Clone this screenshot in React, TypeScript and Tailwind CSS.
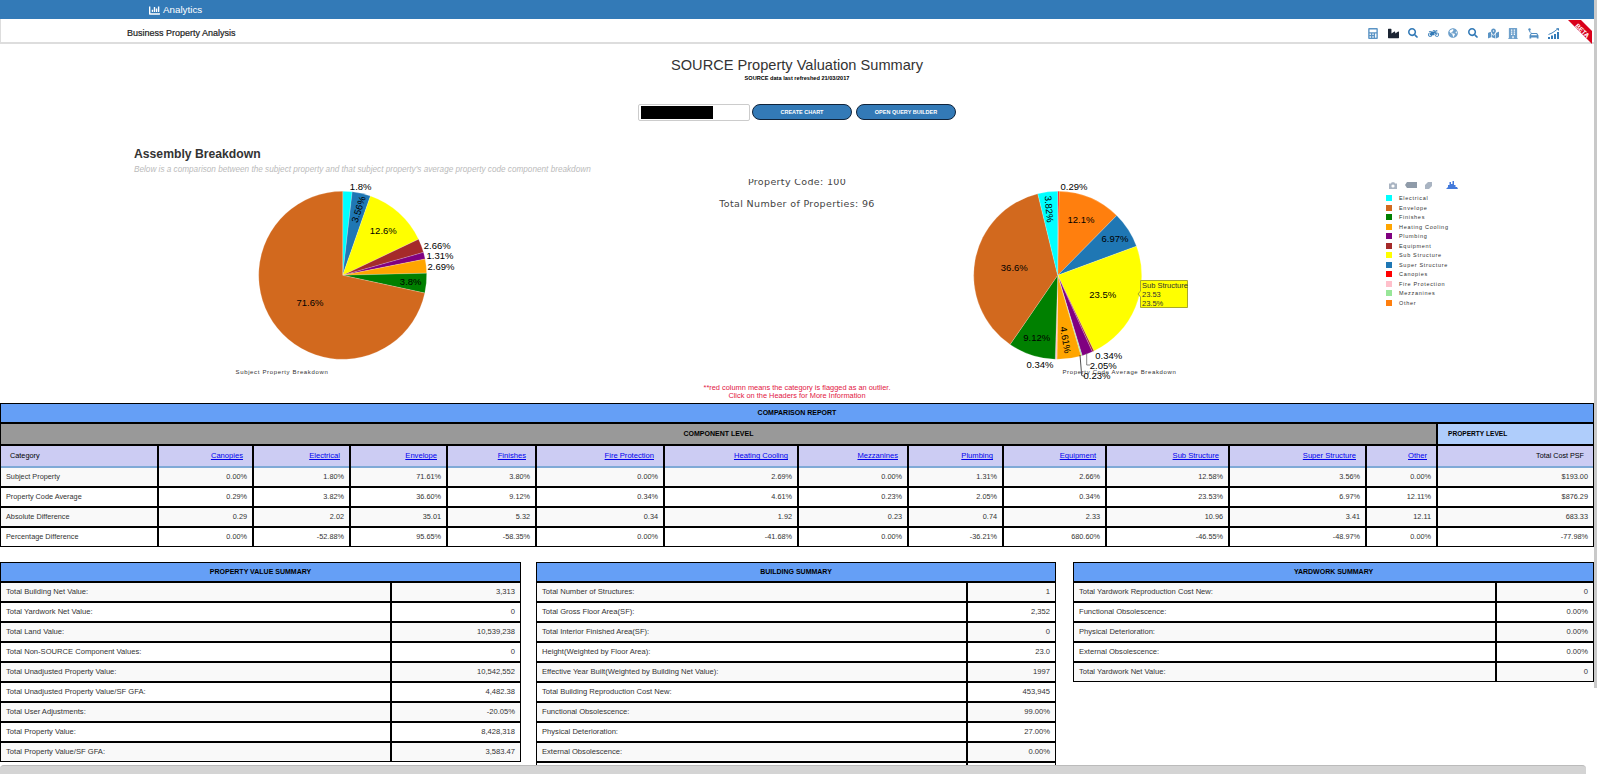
import {
  FaCalculator,
  FaChartBar,
  FaBuilding,
  FaGlobeAmericas,
  FaIndustry,
  FaMapMarkedAlt,
  FaMotorcycle,
  FaSearch,
} from "react-icons/fa";

const columns = [
  "Canopies",
  "Electrical",
  "Envelope",
  "Finishes",
  "Fire Protection",
  "Heating Cooling",
  "Mezzanines",
  "Plumbing",
  "Equipment",
  "Sub Structure",
  "Super Structure",
  "Other",
];

const comparison = [
  ["Subject Property", "0.00%", "1.80%", "71.61%", "3.80%", "0.00%", "2.69%", "0.00%", "1.31%", "2.66%", "12.58%", "3.56%", "0.00%", "$193.00"],
  ["Property Code Average", "0.29%", "3.82%", "36.60%", "9.12%", "0.34%", "4.61%", "0.23%", "2.05%", "0.34%", "23.53%", "6.97%", "12.11%", "$876.29"],
  ["Absolute Difference", "0.29", "2.02", "35.01", "5.32", "0.34", "1.92", "0.23", "0.74", "2.33", "10.96", "3.41", "12.11", "683.33"],
  ["Percentage Difference", "0.00%", "-52.88%", "95.65%", "-58.35%", "0.00%", "-41.68%", "0.00%", "-36.21%", "680.60%", "-46.55%", "-48.97%", "0.00%", "-77.98%"],
];

const propertySummary = [
  ["Total Building Net Value:", "3,313"],
  ["Total Yardwork Net Value:", "0"],
  ["Total Land Value:", "10,539,238"],
  ["Total Non-SOURCE Component Values:", "0"],
  ["Total Unadjusted Property Value:", "10,542,552"],
  ["Total Unadjusted Property Value/SF GFA:", "4,482.38"],
  ["Total User Adjustments:", "-20.05%"],
  ["Total Property Value:", "8,428,318"],
  ["Total Property Value/SF GFA:", "3,583.47"],
];

const buildingSummary = [
  ["Total Number of Structures:", "1"],
  ["Total Gross Floor Area(SF):", "2,352"],
  ["Total Interior Finished Area(SF):", "0"],
  ["Height(Weighted by Floor Area):", "23.0"],
  ["Effective Year Built(Weighted by Building Net Value):", "1997"],
  ["Total Building Reproduction Cost New:", "453,945"],
  ["Functional Obsolescence:", "99.00%"],
  ["Physical Deterioration:", "27.00%"],
  ["External Obsolescence:", "0.00%"],
  ["Total Building Net Value:", "3,313"],
];

const yardworkSummary = [
  ["Total Yardwork Reproduction Cost New:", "0"],
  ["Functional Obsolescence:", "0.00%"],
  ["Physical Deterioration:", "0.00%"],
  ["External Obsolescence:", "0.00%"],
  ["Total Yardwork Net Value:", "0"],
];

const legend = [
  ["Electrical", "#00ffff"],
  ["Envelope", "#d2691e"],
  ["Finishes", "#008000"],
  ["Heating Cooling", "#ffa500"],
  ["Plumbing", "#800080"],
  ["Equipment", "#a52a2a"],
  ["Sub Structure", "#ffff00"],
  ["Super Structure", "#1f77b4"],
  ["Canopies", "#ff0000"],
  ["Fire Protection", "#ffc0cb"],
  ["Mezzanines", "#98e698"],
  ["Other", "#ff7f0e"],
];

type Slice = [number, string];
type Label = [string, number, number, number?];

const subjectSlices: Slice[] = [
  [1.8, "#00ffff"],
  [3.56, "#1f77b4"],
  [12.58, "#ffff00"],
  [2.66, "#a52a2a"],
  [1.31, "#800080"],
  [2.69, "#ffa500"],
  [3.8, "#008000"],
  [71.61, "#d2691e"],
];

const averageSlices: Slice[] = [
  [0.29, "#ff0000"],
  [12.11, "#ff7f0e"],
  [6.97, "#1f77b4"],
  [23.53, "#ffff00"],
  [0.34, "#a52a2a"],
  [2.05, "#800080"],
  [0.23, "#98e698"],
  [4.61, "#ffa500"],
  [0.34, "#ffc0cb"],
  [9.12, "#008000"],
  [36.6, "#d2691e"],
  [3.82, "#00ffff"],
];

const subjectLabels: Label[] = [
  ["1.8%", 360.7, 186.7],
  ["3.56%", 358.3, 209.3, -72],
  ["12.6%", 383.3, 230],
  ["2.66%", 437.3, 245],
  ["1.31%", 440, 255.3],
  ["2.69%", 441, 266],
  ["3.8%", 410.7, 281.7],
  ["71.6%", 310, 302],
];

const averageLabels: Label[] = [
  ["0.29%", 1074, 186.7],
  ["12.1%", 1081, 219],
  ["6.97%", 1115, 238.3],
  ["23.5%", 1102.7, 294],
  ["0.34%", 1108.7, 355],
  ["2.05%", 1103.3, 365],
  ["0.23%", 1097, 375.3],
  ["4.61%", 1065.7, 340, 80],
  ["9.12%", 1036.7, 337.3],
  ["0.34%", 1040, 364.3],
  ["36.6%", 1014.3, 267],
  ["3.82%", 1049.3, 209, 85],
];

function slicePath(cx: number, cy: number, r: number, from: number, to: number) {
  const a = (from / 100) * 2 * Math.PI;
  const b = (to / 100) * 2 * Math.PI;
  const large = to - from > 50 ? 1 : 0;
  const x1 = cx + r * Math.sin(a);
  const y1 = cy - r * Math.cos(a);
  const x2 = cx + r * Math.sin(b);
  const y2 = cy - r * Math.cos(b);
  return `M${cx} ${cy}L${x1} ${y1}A${r} ${r} 0 ${large} 1 ${x2} ${y2}Z`;
}

function Pie({ cx, slices, labels }: { cx: number; slices: Slice[]; labels: Label[] }) {
  const cy = 275.3;
  let total = 0;
  return (
    <>
      {slices.map(([value, color], i) => {
        const from = total;
        total += value;
        return <path key={i} d={slicePath(cx, cy, 84, from, total)} fill={color} stroke="#ffffff" strokeWidth="0.2" />;
      })}
      {labels.map(([text, x, y, rotate], i) => (
        <text
          key={i}
          x={x}
          y={y}
          fontSize="9.5"
          fill="#000"
          textAnchor="middle"
          dominantBaseline="central"
          transform={rotate ? `rotate(${rotate} ${x} ${y})` : undefined}
        >
          {text}
        </text>
      ))}
    </>
  );
}

function SummaryTable({
  title,
  rows,
  left,
  right,
}: {
  title: string;
  rows: string[][];
  left: string;
  right: string;
}) {
  return (
    <div className="bg-black p-px">
      <div className="h-[18px] mb-[2px] bg-[#659ff6] flex items-center justify-center text-[7px] font-bold text-black">
        {title}
      </div>
      {rows.map(([label, value], i) => (
        <div key={label} className={`flex gap-[2px] h-[18px] ${i < rows.length - 1 ? "mb-[2px]" : ""}`}>
          <div className={`${left} pl-[5px] flex items-center ${i % 2 === 0 ? "bg-[#f9f9f9]" : "bg-white"}`}>{label}</div>
          <div className={`${right} pr-[5px] flex items-center justify-end ${i % 2 === 0 ? "bg-[#f9f9f9]" : "bg-white"}`}>{value}</div>
        </div>
      ))}
    </div>
  );
}

const gridCols =
  "grid grid-cols-[156px_93px_95px_95px_87px_126px_132px_108px_93px_101px_121px_135px_69px_155px] gap-x-[2px]";

export default function App() {
  return (
    <div className="relative h-screen w-screen overflow-hidden bg-white font-['Liberation_Sans',Arial,sans-serif] text-[7.6px] text-[#333]">
      <div className="w-[1594px]">
        {/* top nav */}
        <div className="h-[19px] bg-[#337ab7] flex items-center pl-[149px] pt-[2px] text-white text-[9.8px] gap-[3px]">
          <FaChartBar className="w-[11px] h-[11px]" />
          <span>Analytics</span>
        </div>
        <div className="h-[25px] border-l border-b-2 border-[#ddd] flex items-center pl-[126px] pt-[5px] text-[#222]">
          <span className="text-[9px] mt-[1px] [-webkit-text-stroke:0.2px_#222]">Business Property Analysis</span>
          <div className="ml-auto mr-[31px] flex items-center text-[#337ab7]">
            <div className="w-[20px] flex justify-center"><FaCalculator className="w-[10px] h-[11px] opacity-80" /></div>
            <div className="w-[20px] flex justify-center"><FaIndustry className="w-[11px] h-[11px] text-[#1c2533]" /></div>
            <div className="w-[20px] flex justify-center"><FaSearch className="w-[10px] h-[10px]" /></div>
            <div className="w-[20px] flex justify-center"><FaMotorcycle className="w-[11px] h-[11px]" /></div>
            <div className="w-[20px] flex justify-center"><FaGlobeAmericas className="w-[10px] h-[10px] opacity-70" /></div>
            <div className="w-[20px] flex justify-center"><FaSearch className="w-[10px] h-[10px]" /></div>
            <div className="w-[20px] flex justify-center"><FaMapMarkedAlt className="w-[11px] h-[11px] opacity-80" /></div>
            <div className="w-[20px] flex justify-center"><FaBuilding className="w-[10px] h-[11px] opacity-70" /></div>
            <div className="w-[20px] flex justify-center">
              <svg width="11" height="11" viewBox="0 0 11 11" fill="currentColor" opacity="0.85">
                <circle cx="1.5" cy="1.5" r="1.2" />
                <path d="M1.5 2V4H3V4.6" fill="none" stroke="currentColor" strokeWidth="0.7" />
                <path d="M3 5H9L10.5 7.5V10.5H8.8V9.5H3.2V10.5H1.5V7.5ZM3.5 6L2.9 7.2H9.1L8.5 6Z" fillRule="evenodd" />
              </svg>
            </div>
            <div className="w-[20px] flex justify-center">
              <svg width="11" height="11" viewBox="0 0 11 11" fill="currentColor">
                <path d="M0 9H2V11H0ZM3 7.5H5V11H3ZM6 6H8V11H6ZM9 4H11V11H9Z" />
                <path d="M0.5 6.5L4 5L7 3L9.5 1" fill="none" stroke="currentColor" strokeWidth="0.9" />
                <path d="M8 .3H11V3Z" />
              </svg>
            </div>
          </div>
        </div>

        {/* title */}
        <div className="pt-[13px] text-center">
          <div className="h-[17px] leading-[17px] text-[14.6px] text-[#333]">SOURCE Property Valuation Summary</div>
          <div className="h-[8px] leading-[8px] text-[5.6px] font-bold text-black">SOURCE data last refreshed 21/03/2017</div>
        </div>

        {/* query controls */}
        <div className="mt-[22px] flex justify-center items-start h-[17px]">
          <div className="w-[112px] h-[17px] border border-[#ccc] rounded-[2px] p-[1px] pl-[2px]">
            <div className="w-[72px] h-full bg-black" />
          </div>
          <button className="ml-[2px] w-[100px] h-[16px] rounded-full border border-[#10233a] bg-[#337ab7] text-white text-[5.5px] font-bold">
            CREATE CHART
          </button>
          <button className="ml-[4px] w-[100px] h-[16px] rounded-full border border-[#10233a] bg-[#337ab7] text-white text-[5.5px] font-bold">
            OPEN QUERY BUILDER
          </button>
        </div>

        {/* charts */}
        <div className="mt-[25px] h-[234px] flex items-start">
          <div className="w-[634px] shrink-0">
            <div className="pl-[134px] h-[16px] leading-[16px] text-[12.2px] font-bold text-[#333]">Assembly Breakdown</div>
            <div className="pl-[134px] h-[14px] leading-[16px] text-[8.2px] italic text-[#bbb] whitespace-nowrap">
              Below is a comparison between the subject property and that subject property's average property code component breakdown
            </div>
            <svg className="ml-[220px] block" width="260" height="204" viewBox="220 176 260 204">
              <Pie cx={342.7} slices={subjectSlices} labels={subjectLabels} />
              <text x="282" y="372" fontSize="6" letterSpacing="0.65" textAnchor="middle" dominantBaseline="central" fill="#333">
                Subject Property Breakdown
              </text>
            </svg>
          </div>

          <div className="w-[326px] shrink-0 mt-[33px] h-[40px] overflow-hidden text-center font-['DejaVu_Sans',sans-serif] text-[9.5px] tracking-[0.35px] text-[#444]">
            <div className="h-[8px] leading-[5px]">Property Code: 100</div>
            <div className="mt-[11px] leading-[12px]">Total Number of Properties: 96</div>
          </div>

          <svg className="mt-[30px] block shrink-0" width="260" height="204" viewBox="960 176 260 204">
            <Pie cx={1057.7} slices={averageSlices} labels={averageLabels} />
            <path d="M1080 355L1081.7 375.5L1085 376.5" fill="none" stroke="#222" strokeWidth="0.8" />
            <path d="M1086.7 353L1086.7 365L1090 365" fill="none" stroke="#666" strokeWidth="0.8" />
            <text x="1119.5" y="372" fontSize="6" letterSpacing="0.65" textAnchor="middle" dominantBaseline="central" fill="#333">
              Property Code Average Breakdown
            </text>
            <path d="M1140.5 280.5H1187.5V307.5H1140.5V297L1138 294L1140.5 291Z" fill="#ffff00" stroke="#a8a82a" />
            <g fontSize="7.5" fill="#333">
              <text x="1142" y="288">Sub Structure</text>
              <text x="1142" y="297">23.53</text>
              <text x="1142" y="305.5">23.5%</text>
            </g>
          </svg>

          <div className="ml-[166px] mt-[35px] w-[80px]">
            <div className="flex items-center h-[8px] text-[#a9b4c2] gap-[8px] pl-[3px] mb-[4.5px]">
              <svg width="8" height="7" viewBox="0 0 8 7">
                <path d="M0 1.5H2L2.7 .3H5.3L6 1.5H8V7H0ZM4 2.4A1.6 1.6 0 1 0 4 5.6A1.6 1.6 0 1 0 4 2.4Z" fill="currentColor" fillRule="evenodd" />
              </svg>
              <svg width="12" height="6" viewBox="0 0 12 6">
                <path d="M2 0H12V6H2L0 3Z" fill="#8f9ba9" />
              </svg>
              <svg width="7" height="7" viewBox="0 0 7 7">
                <path d="M3 0H7V4L4 7H0V3Z" fill="currentColor" />
              </svg>
              <svg className="ml-[6px]" width="12" height="8" viewBox="0 0 12 8">
                <path d="M0 8L2 6V4H3.5V1H5V3H6.5V0H8V4H9.5V6H11L12 8Z" fill="#447adb" />
              </svg>
            </div>
            {legend.map(([name, color]) => (
              <div key={name} className="flex items-center h-[9.5px]">
                <span className="w-[6px] h-[6px] shrink-0" style={{ backgroundColor: color }} />
                <span className="ml-[7px] text-[5.5px] tracking-[0.7px] text-[#333] whitespace-nowrap">{name}</span>
              </div>
            ))}
          </div>
        </div>

        {/* outlier note */}
        <div className="mt-[4px] text-center text-[#e2163f] text-[7.4px] leading-[8px]">
          <div className="h-[8px]">**red column means the category is flagged as an outlier.</div>
          <div className="h-[8px]">Click on the Headers for More Information</div>
        </div>

        {/* comparison report */}
        <div className="mt-[3px] bg-black p-px text-[7.3px]">
          <div className="h-[18px] mb-[2px] bg-[#659ff6] flex items-center justify-center text-[7px] font-bold text-black">
            COMPARISON REPORT
          </div>
          <div className={`${gridCols} h-[20px] mb-[2px]`}>
            <div className="col-span-13 bg-[#999] flex items-center justify-center text-[7px] font-bold text-black">
              COMPONENT LEVEL
            </div>
            <div className="bg-[#afcdfb] flex items-center pl-[10px] text-[6.6px] font-bold text-black">
              PROPERTY LEVEL
            </div>
          </div>
          <div className={`${gridCols} h-[22px]`}>
            <div className="bg-[#ccccf3] border-b-2 border-[#7fa9d6] flex items-center pl-[9px] text-black">Category</div>
            {columns.map((name) => (
              <div key={name} className="bg-[#ccccf3] border-b-2 border-[#7fa9d6] flex items-center justify-end pr-[9px] text-[7.6px]">
                <a href="#" className="text-[#0000ee] underline">
                  {name}
                </a>
              </div>
            ))}
            <div className="bg-[#ccccf3] border-b-2 border-[#7fa9d6] flex items-center justify-end pr-[9px] text-black text-[7.2px]">
              Total Cost PSF
            </div>
          </div>
          {comparison.map((row, r) => (
            <div key={row[0]} className={`${gridCols} h-[18px] ${r < 3 ? "mb-[2px]" : ""}`}>
              {row.map((cell, c) => (
                <div
                  key={c}
                  className={`flex items-center ${c === 0 ? "pl-[5px]" : "justify-end pr-[5px]"} ${r % 2 === 0 ? "bg-[#f9f9f9]" : "bg-white"}`}
                >
                  {cell}
                </div>
              ))}
            </div>
          ))}
        </div>

        {/* summaries */}
        <div className="mt-[15px] flex items-start">
          <div className="w-[521px] shrink-0">
            <SummaryTable title="PROPERTY VALUE SUMMARY" rows={propertySummary} left="w-[389px]" right="w-[128px]" />
          </div>
          <div className="ml-[15px] w-[520px] shrink-0">
            <SummaryTable title="BUILDING SUMMARY" rows={buildingSummary} left="w-[429px]" right="w-[87px]" />
          </div>
          <div className="ml-[17px] w-[521px] shrink-0">
            <SummaryTable title="YARDWORK SUMMARY" rows={yardworkSummary} left="w-[421px]" right="w-[96px]" />
          </div>
        </div>
      </div>

      {/* beta ribbon */}
      <svg className="absolute right-[4px] top-[20px]" width="26" height="25" viewBox="0 0 26 25">
        <path d="M1 0H14L25 11V24Z" fill="#d9001b" />
        <text x="15.5" y="10.5" fontSize="6.5" fontWeight="bold" fill="#fff" textAnchor="middle" dominantBaseline="central" transform="rotate(45 15.5 10.5)">
          BETA
        </text>
      </svg>

      {/* scrollbars */}
      <div className="absolute right-0 top-0 w-[3px] h-[688px] bg-[#c9c9c9]" />
      <div className="absolute left-0 bottom-0 w-[1586px] h-[9px] bg-[#d4d4d4] border-t border-[#bbb] rounded-t-[4px]" />
    </div>
  );
}
